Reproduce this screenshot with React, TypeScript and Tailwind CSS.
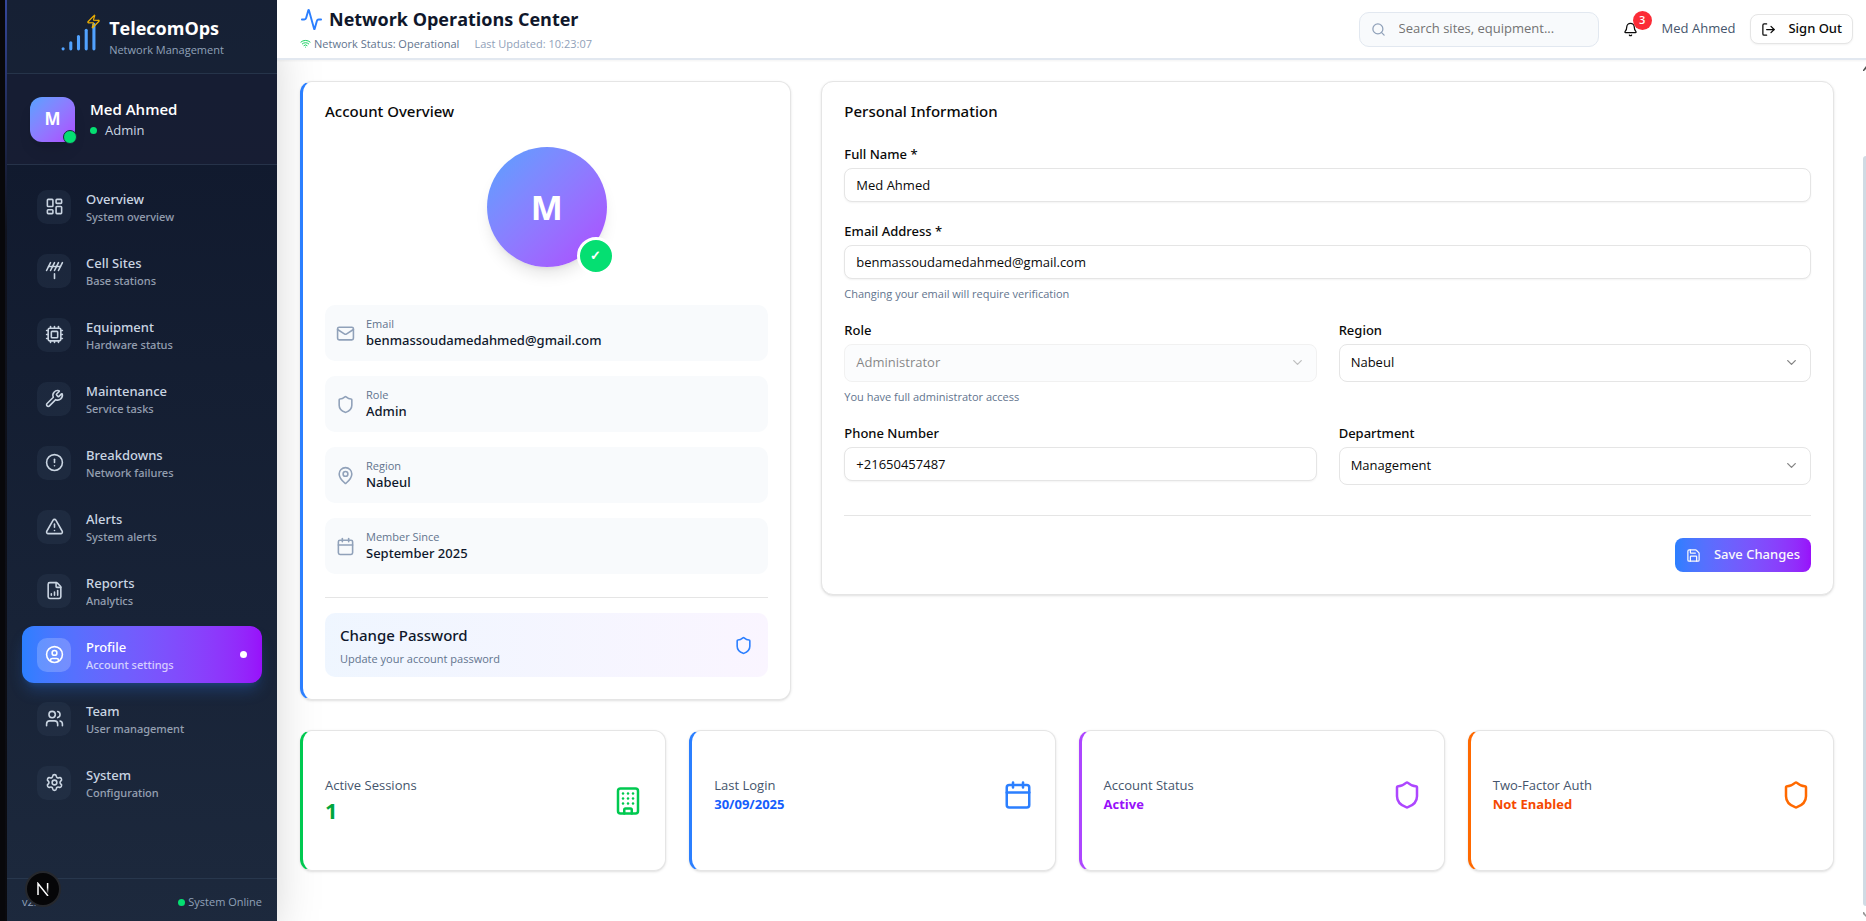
import { useState } from "react";
import type { ReactNode } from "react";
import {
  Activity,
  Antenna,
  Bell,
  Building,
  Calendar,
  ChevronDown,
  CircleAlert,
  CircleUser,
  Cpu,
  FileChartColumnIncreasing,
  LayoutDashboard,
  LogOut,
  Mail,
  MapPin,
  Save,
  Search,
  Settings,
  Shield,
  Signal,
  TriangleAlert,
  Users,
  Wifi,
  Wrench,
  Zap,
} from "lucide-react";
import type { LucideIcon } from "lucide-react";

type NavEntry = { title: string; subtitle: string; icon: LucideIcon };

const navEntries: NavEntry[] = [
  { title: "Overview", subtitle: "System overview", icon: LayoutDashboard },
  { title: "Cell Sites", subtitle: "Base stations", icon: Antenna },
  { title: "Equipment", subtitle: "Hardware status", icon: Cpu },
  { title: "Maintenance", subtitle: "Service tasks", icon: Wrench },
  { title: "Breakdowns", subtitle: "Network failures", icon: CircleAlert },
  { title: "Alerts", subtitle: "System alerts", icon: TriangleAlert },
  { title: "Reports", subtitle: "Analytics", icon: FileChartColumnIncreasing },
  { title: "Profile", subtitle: "Account settings", icon: CircleUser },
  { title: "Team", subtitle: "User management", icon: Users },
  { title: "System", subtitle: "Configuration", icon: Settings },
];

// Open Sans has no medium cut, so medium-weight text is set in Noto Sans.
const mediumText = "font-['Noto_Sans',sans-serif] font-medium";

function NavItem({ entry, active }: { entry: NavEntry; active: boolean }) {
  const Icon = entry.icon;
  return (
    <a
      href={"#" + entry.title.toLowerCase().replace(" ", "-")}
      aria-current={active ? "page" : undefined}
      className={
        active
          ? "flex h-[57px] items-center rounded-xl bg-linear-to-r from-[#2b7fff] to-[#9810fa] px-[15px] text-white shadow-lg shadow-[#2b7fff]/25"
          : "flex h-[57px] items-center rounded-xl px-[15px] text-slate-300"
      }
    >
      <span
        className={
          active
            ? "flex size-[34px] items-center justify-center rounded-[10px] bg-white/20"
            : "flex size-[34px] items-center justify-center rounded-[10px] bg-slate-700/30"
        }
      >
        <Icon size={19} />
      </span>
      <span className={"ml-[15px] flex flex-1 flex-col " + mediumText}>
        <span className="text-[13px] leading-[19px]">{entry.title}</span>
        <span className="text-[11px] leading-[15px] opacity-70">{entry.subtitle}</span>
      </span>
      {active && <span className="size-[7px] rounded-full bg-white" />}
    </a>
  );
}

function Sidebar() {
  return (
    <aside className="flex w-[277px] shrink-0 bg-[#08080b] pl-[5px] shadow-2xl">
      <div className="w-[2px] bg-linear-to-b from-[#35479b] via-[#10131f] via-25% to-[#0a0a0e]" />
      <div className="flex min-w-0 flex-1 flex-col bg-linear-to-b from-slate-900 to-slate-800">
        <div className="flex h-[74px] items-center justify-center gap-3 border-b border-slate-700/60 bg-slate-800/50">
          <div className="relative">
            <Signal size={37} className="text-[#51a2ff]" />
            <Zap size={15} className="absolute -top-[4px] -right-[4px] text-[#f0b100]" />
          </div>
          <div>
            <div className="text-[18px] leading-[24px] font-bold text-white">TelecomOps</div>
            <div className="mt-[2px] text-[11px] leading-[15px] text-slate-400">Network Management</div>
          </div>
        </div>

        <div className="flex h-[91px] items-center gap-[15px] border-b border-slate-700/60 bg-[#1a2036]/70 px-[23px]">
          <div className="relative flex size-[45px] items-center justify-center rounded-xl bg-linear-to-br from-[#51a2ff] to-[#ad46ff] text-[17px] font-bold text-white shadow-lg">
            M
            <span className="absolute -right-[2px] -bottom-[2px] size-[14px] rounded-full border border-slate-800 bg-[#05df72]" />
          </div>
          <div>
            <div className="text-[15px] leading-[22px] font-semibold text-white">Med Ahmed</div>
            <div className="flex items-center gap-2 text-[13px] leading-[20px] text-slate-300">
              <span className="size-[7px] rounded-full bg-[#05df72]" />
              Admin
            </div>
          </div>
        </div>

        <nav className="flex flex-1 flex-col gap-[7px] px-[15px] pt-[13px]">
          {navEntries.map((entry) => (
            <NavItem key={entry.title} entry={entry} active={entry.title === "Profile"} />
          ))}
        </nav>

        <div className="relative flex h-[43px] items-center justify-between border-t border-slate-700/60 px-[15px] pt-1 text-[11px] text-slate-400">
          <span>v2.1</span>
          <span className="flex items-center gap-[3px]">
            <span className="size-[7px] rounded-full bg-[#05df72]" />
            System Online
          </span>
          <button
            type="button"
            aria-label="Developer tools"
            className="absolute -top-[8px] left-[18px] flex size-[36px] items-center justify-center rounded-full border-2 border-[#26282d] bg-[#060608]"
          >
            <svg width="14" height="14" viewBox="0 0 14 14" fill="none" strokeWidth="1.5">
              <defs>
                <linearGradient id="dev-stem" x1="0" y1="0" x2="0" y2="14" gradientUnits="userSpaceOnUse">
                  <stop offset="0.4" stopColor="#fff" />
                  <stop offset="0.85" stopColor="#fff" stopOpacity="0" />
                </linearGradient>
              </defs>
              <path d="M2 13V1.5L12 14" stroke="#fff" />
              <path d="M11.6 1V12" stroke="url(#dev-stem)" />
            </svg>
          </button>
        </div>
      </div>
    </aside>
  );
}

function Header() {
  return (
    <header className="relative z-10 flex h-[60px] items-center justify-between border-b-2 border-slate-200 bg-white/95 pr-[13px] pl-[23px] shadow-xs">
      <div>
        <h1 className="flex items-center gap-[6px] text-[18px] leading-[22px] font-bold text-slate-900">
          <Activity size={23} className="text-[#2b7fff]" />
          Network Operations Center
        </h1>
        <div className="mt-[5px] flex items-center gap-[15px] text-[11px] leading-[15px]">
          <span className="flex items-center gap-[3px] text-slate-500">
            <Wifi size={11} className="text-[#00c950]" />
            Network Status: Operational
          </span>
          <span className="text-slate-400">Last Updated: 10:23:07</span>
        </div>
      </div>
      <div className="flex items-center">
        <label className="flex h-[35px] w-[240px] items-center gap-[13px] rounded-[10px] border border-slate-200 bg-slate-50 px-[11px]">
          <Search size={15} className="shrink-0 text-slate-400" />
          <input
            type="search"
            aria-label="Search"
            placeholder="Search sites, equipment..."
            className="min-w-0 flex-1 bg-transparent text-[13px] outline-none placeholder:text-neutral-500"
          />
        </label>
        <button type="button" aria-label="Notifications" className="relative ml-[23px] p-[1px]">
          <Bell size={15} className="text-neutral-950" />
          <span className="absolute -top-[10px] -right-[13px] flex size-[19px] items-center justify-center rounded-full bg-[#fb2c36] text-[11px] font-semibold text-white">
            3
          </span>
        </button>
        <span className="ml-[23px] text-[13px] text-slate-600">Med Ahmed</span>
        <button
          type="button"
          className={
            "ml-[15px] flex h-[30px] items-center gap-[12px] rounded-lg border border-neutral-200 bg-white px-[10px] text-[13px] text-neutral-950 shadow-xs " +
            mediumText
          }
        >
          <LogOut size={15} />
          Sign Out
        </button>
      </div>
    </header>
  );
}

function DetailRow({ icon: Icon, label, value }: { icon: LucideIcon; label: string; value: string }) {
  return (
    <div className="flex h-[56px] items-center gap-[11px] rounded-[10px] bg-slate-50 px-[11px]">
      <Icon size={19} className="text-slate-400" />
      <div>
        <div className="text-[11px] leading-[15px] text-slate-500">{label}</div>
        <div className={"text-[13px] leading-[19px] text-slate-900 " + mediumText}>{value}</div>
      </div>
    </div>
  );
}

function AccountOverview() {
  return (
    <section className="rounded-xl border border-l-3 border-neutral-200 border-l-[#2b7fff] bg-white px-[22px] pt-[22px] pb-[22px] shadow-sm">
      <h2 className={"text-[15px] leading-[15px] text-neutral-950 " + mediumText}>Account Overview</h2>
      <div className="mt-[28px] flex justify-center">
        <div className="relative flex size-[120px] items-center justify-center rounded-full bg-linear-to-br from-[#51a2ff] to-[#ad46ff] text-[34px] font-bold text-white shadow-lg">
          M
          <span className="absolute -right-[8px] -bottom-[8px] flex size-[38px] items-center justify-center rounded-full border-3 border-white bg-[#05df72] text-[13px]">
            ✓
          </span>
        </div>
      </div>
      <div className="mt-[38px] flex flex-col gap-[15px]">
        <DetailRow icon={Mail} label="Email" value="benmassoudamedahmed@gmail.com" />
        <DetailRow icon={Shield} label="Role" value="Admin" />
        <DetailRow icon={MapPin} label="Region" value="Nabeul" />
        <DetailRow icon={Calendar} label="Member Since" value="September 2025" />
      </div>
      <div className="mt-[23px] border-t border-neutral-200 pt-[15px]">
        <button
          type="button"
          className="flex h-[64px] w-full items-center justify-between rounded-[10px] bg-linear-to-r from-blue-50 to-purple-50 px-[15px] text-left"
        >
          <span className="flex flex-col">
            <span className={"text-[15px] leading-[23px] text-slate-900 " + mediumText}>Change Password</span>
            <span className="mt-[4px] text-[11px] leading-[15px] text-slate-500">Update your account password</span>
          </span>
          <Shield size={19} className="text-[#2b7fff]" />
        </button>
      </div>
    </section>
  );
}

function Field({ id, label, hint, children }: { id: string; label: string; hint?: string; children: ReactNode }) {
  return (
    <div className="flex flex-col">
      <label htmlFor={id} className={"mb-[7px] text-[13px] leading-[14px] text-neutral-950 " + mediumText}>
        {label}
      </label>
      {children}
      {hint && <p className="mt-[7px] text-[11px] leading-[15px] text-slate-500">{hint}</p>}
    </div>
  );
}

function TextInput({ id, type, initial }: { id: string; type: string; initial: string }) {
  const [value, setValue] = useState(initial);
  return (
    <input
      id={id}
      type={type}
      value={value}
      onChange={(event) => setValue(event.target.value)}
      className="h-[34px] w-full rounded-lg border border-neutral-200 bg-white px-[11px] text-[13px] text-neutral-950 shadow-xs outline-none"
    />
  );
}

function SelectInput({ id, options, disabled }: { id: string; options: string[]; disabled?: boolean }) {
  return (
    <div className={disabled ? "relative opacity-50" : "relative"}>
      <select
        id={id}
        disabled={disabled}
        className={
          disabled
            ? "h-[38px] w-full appearance-none rounded-lg border border-neutral-200 bg-slate-50 px-[11px] text-[13px] text-neutral-950 opacity-100"
            : "h-[38px] w-full appearance-none rounded-lg border border-neutral-200 bg-white px-[11px] text-[13px] text-neutral-950"
        }
      >
        {options.map((option) => (
          <option key={option}>{option}</option>
        ))}
      </select>
      <ChevronDown
        size={15}
        className="pointer-events-none absolute top-[11px] right-[12px] text-neutral-950 opacity-50"
      />
    </div>
  );
}

function PersonalInformation() {
  return (
    <section className="self-start rounded-xl border border-neutral-200 bg-white p-[22px] shadow-sm lg:col-span-2">
      <h2 className={"text-[15px] leading-[15px] text-neutral-950 " + mediumText}>Personal Information</h2>
      <form className="mt-[28px]" onSubmit={(event) => event.preventDefault()}>
        <div className="flex flex-col gap-[22px]">
          <Field id="full-name" label="Full Name *">
            <TextInput id="full-name" type="text" initial="Med Ahmed" />
          </Field>
          <Field id="email" label="Email Address *" hint="Changing your email will require verification">
            <TextInput id="email" type="email" initial="benmassoudamedahmed@gmail.com" />
          </Field>
          <div className="grid grid-cols-2 gap-x-[22px] gap-y-[22px]">
            <Field id="role" label="Role" hint="You have full administrator access">
              <SelectInput id="role" options={["Administrator"]} disabled />
            </Field>
            <Field id="region" label="Region">
              <SelectInput id="region" options={["Nabeul", "Tunis", "Sousse"]} />
            </Field>
            <Field id="phone" label="Phone Number">
              <TextInput id="phone" type="tel" initial="+21650457487" />
            </Field>
            <Field id="department" label="Department">
              <SelectInput id="department" options={["Management", "Engineering"]} />
            </Field>
          </div>
        </div>
        <div className="mt-[30px] flex justify-end border-t border-neutral-200 pt-[22px]">
          <button
            type="submit"
            className={
              "flex h-[34px] items-center gap-[13px] rounded-lg bg-linear-to-r from-[#2b7fff] to-[#9810fa] px-[11px] text-[13px] text-neutral-50 " +
              mediumText
            }
          >
            <Save size={15} />
            Save Changes
          </button>
        </div>
      </form>
    </section>
  );
}

type Stat = {
  label: string;
  value: string;
  icon: LucideIcon;
  border: string;
  iconColor: string;
  valueStyle: string;
};

const stats: Stat[] = [
  {
    label: "Active Sessions",
    value: "1",
    icon: Building,
    border: "border-l-[#00c950]",
    iconColor: "text-[#00c950]",
    valueStyle: "text-[22px] leading-[30px] text-[#00a63e]",
  },
  {
    label: "Last Login",
    value: "30/09/2025",
    icon: Calendar,
    border: "border-l-[#2b7fff]",
    iconColor: "text-[#2b7fff]",
    valueStyle: "text-[13px] leading-[19px] text-[#155dfc]",
  },
  {
    label: "Account Status",
    value: "Active",
    icon: Shield,
    border: "border-l-[#ad46ff]",
    iconColor: "text-[#ad46ff]",
    valueStyle: "text-[13px] leading-[19px] text-[#9810fa]",
  },
  {
    label: "Two-Factor Auth",
    value: "Not Enabled",
    icon: Shield,
    border: "border-l-[#ff6900]",
    iconColor: "text-[#ff6900]",
    valueStyle: "text-[13px] leading-[19px] text-[#f54900]",
  },
];

function StatCard({ stat }: { stat: Stat }) {
  const Icon = stat.icon;
  return (
    <section
      className={
        "rounded-xl border border-l-3 border-neutral-200 bg-white px-[22px] py-[45px] shadow-sm " + stat.border
      }
    >
      <div className="flex items-center justify-between">
        <div>
          <p className="text-[13px] leading-[19px] text-slate-600">{stat.label}</p>
          <p className={"font-bold " + stat.valueStyle}>{stat.value}</p>
        </div>
        <Icon size={30} className={stat.iconColor} />
      </div>
    </section>
  );
}

export default function App() {
  return (
    <div className="relative flex min-h-screen overflow-hidden bg-white font-['Open_Sans','Noto_Sans',sans-serif]">
      <Sidebar />
      <div className="flex min-w-0 flex-1 flex-col">
        <Header />
        <main className="pt-[21px] pr-[32px] pb-[30px] pl-[23px]">
          <div className="grid gap-[30px] lg:grid-cols-3">
            <AccountOverview />
            <PersonalInformation />
          </div>
          <div className="mt-[30px] grid grid-cols-2 gap-[23px] lg:grid-cols-4">
            {stats.map((stat) => (
              <StatCard key={stat.label} stat={stat} />
            ))}
          </div>
        </main>
      </div>
      <div
        aria-hidden="true"
        className="absolute top-[156px] right-0 bottom-[15px] w-[3px] rounded-l-sm bg-[#d0dbe4]"
      />
      <svg
        aria-hidden="true"
        className="absolute top-[65px] right-0"
        width="3"
        height="7"
        viewBox="0 0 3 7"
      >
        <path d="M0 5L3 1V4L1 6H0Z" fill="#505050" />
      </svg>
      <svg
        aria-hidden="true"
        className="absolute right-0 bottom-[3px]"
        width="3"
        height="7"
        viewBox="0 0 3 7"
      >
        <path d="M0 1H1L3 4V6L0 3Z" fill="#505050" fillOpacity="0.6" />
      </svg>
    </div>
  );
}
